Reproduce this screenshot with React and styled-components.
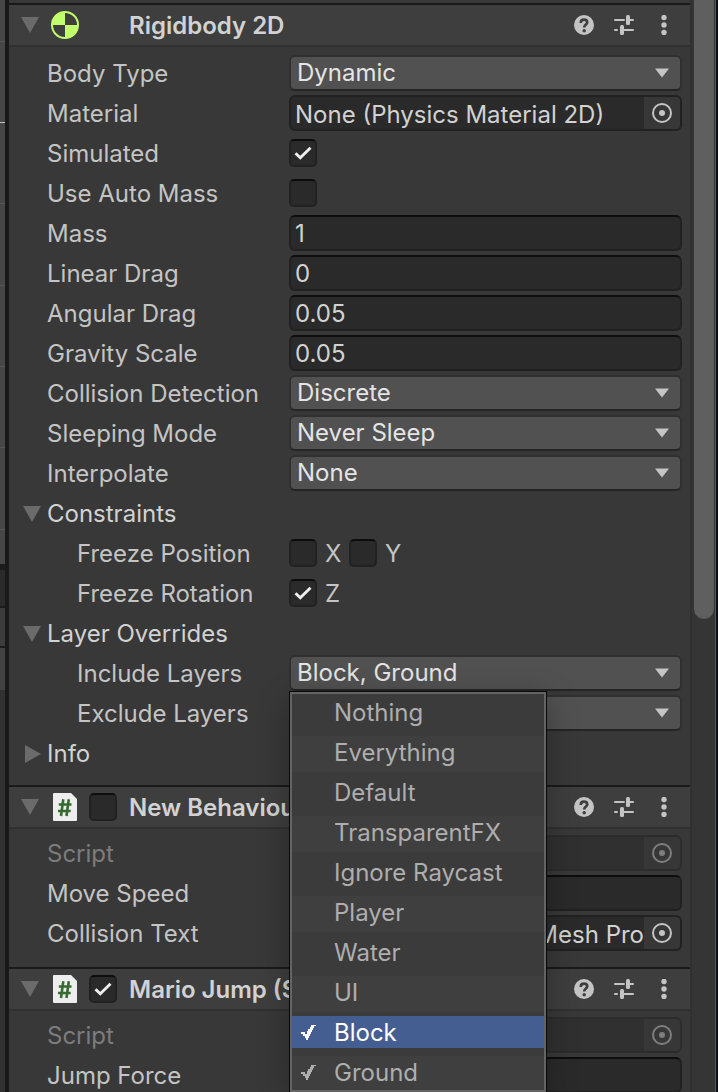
import React, { useId } from "react";
import styled, { createGlobalStyle, css } from "styled-components";

const GlobalStyle = createGlobalStyle`
  *, *::before, *::after { box-sizing: border-box; }
  html, body { margin: 0; background: #383838; }
  body, button, input, select {
    font-family: Inter, "Liberation Sans", sans-serif;
    font-size: 24px;
    line-height: 36px;
  }
  body { color: #c4c4c4; overflow: hidden; }
`;

const Shell = styled.div`
  display: grid;
  grid-template-columns: 5px minmax(0, 1fr) 28px;
  height: 100vh;
`;

const Neighbour = styled.div`
  display: flex;
  flex-direction: column;
  background: #323232;
  overflow: hidden;
`;

const SceneView = styled.div`
  display: flex;
  flex-direction: column;
  flex: none;
  padding-bottom: 34px;
  background: #474747;
`;

const GridCell = styled.div`
  height: ${(p) => p.$height}px;
  border-bottom: 1px solid ${(p) => (p.$bright ? "#c0c0c0" : "#555555")};
`;

const DockTab = styled.div`
  flex: none;
  height: ${(p) => p.$height}px;
  background: ${(p) => p.$color};
  border-top: 2px solid #1c1c1c;
`;

const Inspector = styled.main`
  border-left: 4px solid #191919;
  background: #383838;
  padding-top: 3px;
  overflow: hidden;
`;

const Component = styled.section`
  border-top: 2px solid #1a1a1a;
`;

const Header = styled.header`
  display: flex;
  align-items: center;
  height: 42px;
  padding: 0 12px;
  background: #3e3e3e;
  border-bottom: 2px solid #303030;
`;

const HeaderIcon = styled.span`
  display: flex;
  justify-content: center;
  width: 28px;
  margin: 0 10px 0 12px;
`;

const EnableSlot = styled.span`
  display: flex;
  width: 28px;
  margin-right: 12px;
`;

const Title = styled.h2`
  flex: 1;
  min-width: 0;
  margin: 0;
  padding-top: 2px;
  overflow: hidden;
  white-space: nowrap;
  font-size: 24px;
  font-weight: 600;
  line-height: 36px;
  color: #d2d2d2;
`;

const IconButton = styled.button`
  display: flex;
  align-items: center;
  justify-content: center;
  flex: none;
  width: ${(p) => p.$width || 20}px;
  height: 28px;
  padding: 0;
  border: 0;
  background: none;
  color: inherit;
`;

const HeaderActions = styled.div`
  display: flex;
  gap: 20px;
  padding-right: 4px;
`;

const Rows = styled.div`
  display: flex;
  flex-direction: column;
  gap: 4px;
  padding: ${(p) => (p.$loose ? "8px 8px 14px 38px" : "6px 8px 16px 38px")};
`;

const Row = styled.div`
  display: grid;
  grid-template-columns: 242px minmax(0, 1fr);
  grid-template-rows: 36px;
`;

const Label = styled.label`
  padding-top: 1px;
  padding-left: ${(p) => (p.$indent ? 30 : 0)}px;
  white-space: nowrap;
  color: ${(p) => (p.$dim ? "#7c7c7c" : "#c4c4c4")};
`;

const Control = styled.div`
  position: relative;
  display: flex;
  align-items: center;
  min-width: 0;
`;

const Foldout = styled.button`
  display: flex;
  align-items: center;
  gap: 6px;
  height: 36px;
  margin-left: -24px;
  padding: 2px 0 0;
  border: 0;
  background: none;
  color: #d2d2d2;
  text-align: left;
`;

const fieldBox = css`
  width: 100%;
  height: 36px;
  border: 2px solid #212121;
  border-radius: 6px;
  background: #2a2a2a;
  color: #d2d2d2;
`;

const NumberInput = styled.input`
  ${fieldBox}
  border-top-color: #0d0d0d;
  padding: 2px 4px 0;
  outline: 0;
`;

const SelectBox = styled.div`
  display: flex;
  align-items: center;
  width: 100%;
  height: 36px;
  border: 2px solid #303030;
  border-bottom-color: #242424;
  border-radius: 6px;
  background: #515151;
  position: relative;

  svg {
    position: absolute;
    right: 10px;
    pointer-events: none;
  }
`;

const Select = styled.select`
  appearance: none;
  width: 100%;
  height: 32px;
  padding: 0 36px 0 6px;
  border: 0;
  outline: 0;
  background: none;
  color: #e4e4e4;
  line-height: 30px;
`;

const ObjectBox = styled.div`
  ${fieldBox}
  display: flex;
  overflow: hidden;
  opacity: ${(p) => (p.$dim ? 0.5 : 1)};
`;

const ObjectInput = styled.input`
  flex: 1;
  min-width: 0;
  height: 34px;
  padding: 2px 0 0 4px;
  border: 0;
  outline: 0;
  background: none;
  color: #d2d2d2;
  text-align: ${(p) => p.$align || "left"};
`;

const PickerButton = styled(IconButton)`
  width: 36px;
  height: 32px;
  background: #373737;
`;

const CheckWrap = styled.span`
  display: grid;
  flex: none;
  width: 28px;
  height: 28px;

  input, svg { grid-area: 1 / 1; }
  svg { display: none; pointer-events: none; }
  input:checked + svg { display: block; }
`;

const CheckInput = styled.input`
  appearance: none;
  width: 28px;
  height: 28px;
  margin: 0;
  border: 2px solid #212121;
  border-top-color: #0d0d0d;
  border-radius: 5px;
  background: #2a2a2a;
`;

const AxisLabel = styled.label`
  display: flex;
  align-items: center;
  gap: 8px;
  width: 60px;
`;

const AxisName = styled.span`
  padding-top: 2px;
`;

const Menu = styled.ul`
  position: absolute;
  z-index: 2;
  top: calc(100% + 1px);
  left: 1px;
  width: 256px;
  margin: 0;
  padding: 2px 0 0;
  list-style: none;
  border: 2px solid #646464;
  background: #3b3b3b;
  box-shadow: 0 0 0 1px #0a0a0a, 0 8px 30px rgba(0, 0, 0, 0.3);
`;

const MenuItem = styled.li`
  height: 36px;
  margin-bottom: 4px;

  &:nth-child(even) { background: #3f3f3f; }
  &:last-child { height: 34px; margin-bottom: 0; }
`;

const MenuButton = styled.button`
  display: flex;
  align-items: center;
  width: 100%;
  height: 32px;
  padding: 2px 0 0;
  border: 0;
  background: ${(p) => (p.$active ? "#455e91" : "transparent")};
  color: ${(p) => (p.$active ? "#ffffff" : "#aeaeae")};
  line-height: 30px;
  text-align: left;
`;

const MenuMark = styled.span`
  display: flex;
  flex: none;
  width: 42px;
  padding: 0 0 2px 8px;
`;

const ScrollTrack = styled.div`
  display: flex;
  align-items: flex-start;
  border-left: 2px solid #303030;
  border-right: 2px solid #0c1016;
  background: #353535;
  padding-left: 2px;
`;

const ScrollThumb = styled.div`
  width: 20px;
  height: 56.7%;
  margin-right: 1px;
  border-radius: 0 0 10px 10px;
  background: #5f5f5f;
`;

const ScrollEdge = styled.div`
  width: 1px;
  height: 100%;
  background: #585858;
`;

const Triangle = ({ open = true }) => (
  <svg width="18" height="18" viewBox="0 0 18 18" aria-hidden="true">
    <path d={open ? "M0 1H18L9 17Z" : "M2 0L18 9L2 18Z"} fill="#6b6b6b" />
  </svg>
);

const CaretIcon = () => (
  <svg width="16" height="10" viewBox="0 0 16 10" aria-hidden="true">
    <path d="M1 0.500H15L8 9.500Z" fill="#c4c4c4" />
  </svg>
);

const TickIcon = () => (
  <svg width="28" height="28" viewBox="0 0 28 28" aria-hidden="true">
    <path d="M6.500 14.200L11.300 18.800L21.500 8.800" fill="none" stroke="#eeeeee" strokeWidth="2.900" />
  </svg>
);

const MenuTickIcon = () => (
  <svg width="17" height="17" viewBox="0 0 17 17" shapeRendering="crispEdges" aria-hidden="true">
    <path d="M1 8H5V10H7V7H8V5H10V3H11V1H16V2H14V4H13V6H12V8H11V10H10V12H9V14H8V16H6V14H5V12H3V10H1Z" fill="currentColor" />
  </svg>
);

const TargetIcon = () => (
  <svg width="22" height="22" viewBox="0 0 22 22" aria-hidden="true">
    <circle cx="11" cy="11" r="9" fill="none" stroke="#c4c4c4" strokeWidth="2" />
    <circle cx="11" cy="11" r="3" fill="#c4c4c4" />
  </svg>
);

const HelpIcon = () => (
  <svg width="20" height="20" viewBox="0 0 20 20" aria-hidden="true">
    <circle cx="10" cy="10" r="10" fill="#c4c4c4" />
    <path d="M6.800 8V7.500C6.800 5.600 8.200 4.600 10 4.600S13.200 5.700 13.200 7.400C13.200 9.600 10.200 9.600 10.200 12.600" fill="none" stroke="#3e3e3e" strokeWidth="2.700" />
    <circle cx="10.200" cy="15.800" r="1.700" fill="#3e3e3e" />
  </svg>
);

const PresetIcon = () => (
  <svg width="20" height="20" viewBox="0 0 20 20" fill="#c4c4c4" aria-hidden="true">
    <rect x="0" y="4" width="11" height="2" rx="1" />
    <rect x="12" y="0" width="4" height="10" rx="1.500" />
    <rect x="15" y="4" width="5" height="2" rx="1" />
    <rect x="0" y="14" width="4" height="2" rx="1" />
    <rect x="6" y="10" width="4" height="10" rx="1.500" />
    <rect x="9" y="14" width="11" height="2" rx="1" />
  </svg>
);

const MoreIcon = () => (
  <svg width="20" height="20" viewBox="0 0 20 20" fill="#c4c4c4" aria-hidden="true">
    <circle cx="10" cy="2.500" r="2.700" />
    <circle cx="10" cy="10" r="2.700" />
    <circle cx="10" cy="17.500" r="2.700" />
  </svg>
);

const RigidbodyIcon = () => (
  <svg width="28" height="28" viewBox="0 0 28 28" aria-hidden="true">
    <circle cx="14" cy="14" r="13" fill="#3e3e3e" stroke="#c1fd6c" strokeWidth="2" />
    <path d="M14 14V1A13 13 0 0 0 1 14ZM14 14V27A13 13 0 0 0 27 14Z" fill="#c1fd6c" />
  </svg>
);

const ScriptIcon = () => (
  <svg width="24" height="28" viewBox="0 0 24 28" aria-hidden="true">
    <path d="M1 0H18L24 6V27Q24 28 23 28H1Q0 28 0 27V1Q0 0 1 0Z" fill="#eeeeee" />
    <path d="M10.300 6.200L8 23M15.800 6.200L13.500 23M5.800 11.500H18.500M5 18H17.700" fill="none" stroke="#356b2e" strokeWidth="2.600" />
  </svg>
);

function Check({ id, checked, label }) {
  return (
    <CheckWrap>
      <CheckInput type="checkbox" id={id} defaultChecked={checked} aria-label={label} />
      <TickIcon />
    </CheckWrap>
  );
}

function Field({ label, indent, dim, children }) {
  const id = useId();
  return (
    <Row>
      <Label htmlFor={id} $indent={indent} $dim={dim}>{label}</Label>
      <Control>{children(id)}</Control>
    </Row>
  );
}

function NumberField({ label, value }) {
  return (
    <Field label={label}>
      {(id) => <NumberInput id={id} type="text" inputMode="decimal" defaultValue={value} />}
    </Field>
  );
}

function SelectField({ label, value, indent, menu }) {
  return (
    <Field label={label} indent={indent}>
      {(id) => (
        <>
          <SelectBox>
            <Select id={id} defaultValue={value}>
              <option>{value}</option>
            </Select>
            <CaretIcon />
          </SelectBox>
          {menu}
        </>
      )}
    </Field>
  );
}

function ObjectField({ label, value = "", dim, align }) {
  return (
    <Field label={label} dim={dim}>
      {(id) => (
        <ObjectBox $dim={dim}>
          <ObjectInput id={id} type="text" readOnly defaultValue={value} $align={align} />
          <PickerButton type="button" aria-label={`Pick ${label}`}><TargetIcon /></PickerButton>
        </ObjectBox>
      )}
    </Field>
  );
}

function AxisToggle({ axis, checked }) {
  return (
    <AxisLabel>
      <Check checked={checked} />
      <AxisName>{axis}</AxisName>
    </AxisLabel>
  );
}

function ComponentPanel({ title, icon, enabled, loose, children }) {
  return (
    <Component>
      <Header>
        <IconButton type="button" $width={18} aria-label={`Fold ${title}`}><Triangle /></IconButton>
        <HeaderIcon>{icon}</HeaderIcon>
        <EnableSlot>
          {enabled !== undefined && <Check checked={enabled} label={`Enable ${title}`} />}
        </EnableSlot>
        <Title>{title}</Title>
        <HeaderActions>
          <IconButton type="button" aria-label="Help"><HelpIcon /></IconButton>
          <IconButton type="button" aria-label="Presets"><PresetIcon /></IconButton>
          <IconButton type="button" aria-label="More"><MoreIcon /></IconButton>
        </HeaderActions>
      </Header>
      <Rows $loose={loose}>{children}</Rows>
    </Component>
  );
}

const layers = [
  { name: "Nothing" },
  { name: "Everything" },
  { name: "Default" },
  { name: "TransparentFX" },
  { name: "Ignore Raycast" },
  { name: "Player" },
  { name: "Water" },
  { name: "UI" },
  { name: "Block", on: true, active: true },
  { name: "Ground", on: true },
];

function LayerMenu() {
  return (
    <Menu>
      {layers.map((layer) => (
        <MenuItem key={layer.name}>
          <MenuButton type="button" aria-pressed={!!layer.on} $active={layer.active}>
            <MenuMark>{layer.on && <MenuTickIcon />}</MenuMark>
            {layer.name}
          </MenuButton>
        </MenuItem>
      ))}
    </Menu>
  );
}

export default function App() {
  return (
    <>
      <GlobalStyle />
      <Shell>
        <Neighbour aria-hidden="true">
          <SceneView>
            <GridCell $height={42} />
            <GridCell $height={81} $bright />
            <GridCell $height={81} />
            <GridCell $height={82} />
            <GridCell $height={81} />
            <GridCell $height={81} />
            <GridCell $height={82} />
          </SceneView>
          <DockTab $height={4} $color="#1c1c1c" />
          <DockTab $height={38} $color="#2a2a2a" />
          <DockTab $height={40} $color="#3c3c3c" />
          <DockTab $height={44} $color="#424242" />
        </Neighbour>
        <Inspector>
          <ComponentPanel title="Rigidbody 2D" icon={<RigidbodyIcon />} loose>
            <SelectField label="Body Type" value="Dynamic" />
            <ObjectField label="Material" value="None (Physics Material 2D)" />
            <Field label="Simulated">{(id) => <Check id={id} checked />}</Field>
            <Field label="Use Auto Mass">{(id) => <Check id={id} />}</Field>
            <NumberField label="Mass" value="1" />
            <NumberField label="Linear Drag" value="0" />
            <NumberField label="Angular Drag" value="0.05" />
            <NumberField label="Gravity Scale" value="0.05" />
            <SelectField label="Collision Detection" value="Discrete" />
            <SelectField label="Sleeping Mode" value="Never Sleep" />
            <SelectField label="Interpolate" value="None" />
            <Foldout type="button" aria-expanded="true"><Triangle />Constraints</Foldout>
            <Row>
              <Label as="span" $indent>Freeze Position</Label>
              <Control>
                <AxisToggle axis="X" />
                <AxisToggle axis="Y" />
              </Control>
            </Row>
            <Row>
              <Label as="span" $indent>Freeze Rotation</Label>
              <Control>
                <AxisToggle axis="Z" checked />
              </Control>
            </Row>
            <Foldout type="button" aria-expanded="true"><Triangle />Layer Overrides</Foldout>
            <SelectField label="Include Layers" value="Block, Ground" indent menu={<LayerMenu />} />
            <SelectField label="Exclude Layers" value="Nothing" indent />
            <Foldout type="button" aria-expanded="false"><Triangle open={false} />Info</Foldout>
          </ComponentPanel>
          <ComponentPanel title="New Behaviour Script (Script)" icon={<ScriptIcon />} enabled={false}>
            <ObjectField label="Script" dim />
            <NumberField label="Move Speed" value="" />
            <ObjectField label="Collision Text" value="Text (Text Mesh Pro" align="right" />
          </ComponentPanel>
          <ComponentPanel title="Mario Jump (Script)" icon={<ScriptIcon />} enabled>
            <ObjectField label="Script" dim />
            <NumberField label="Jump Force" value="" />
          </ComponentPanel>
        </Inspector>
        <ScrollTrack>
          <ScrollThumb />
          <ScrollEdge />
        </ScrollTrack>
      </Shell>
    </>
  );
}
